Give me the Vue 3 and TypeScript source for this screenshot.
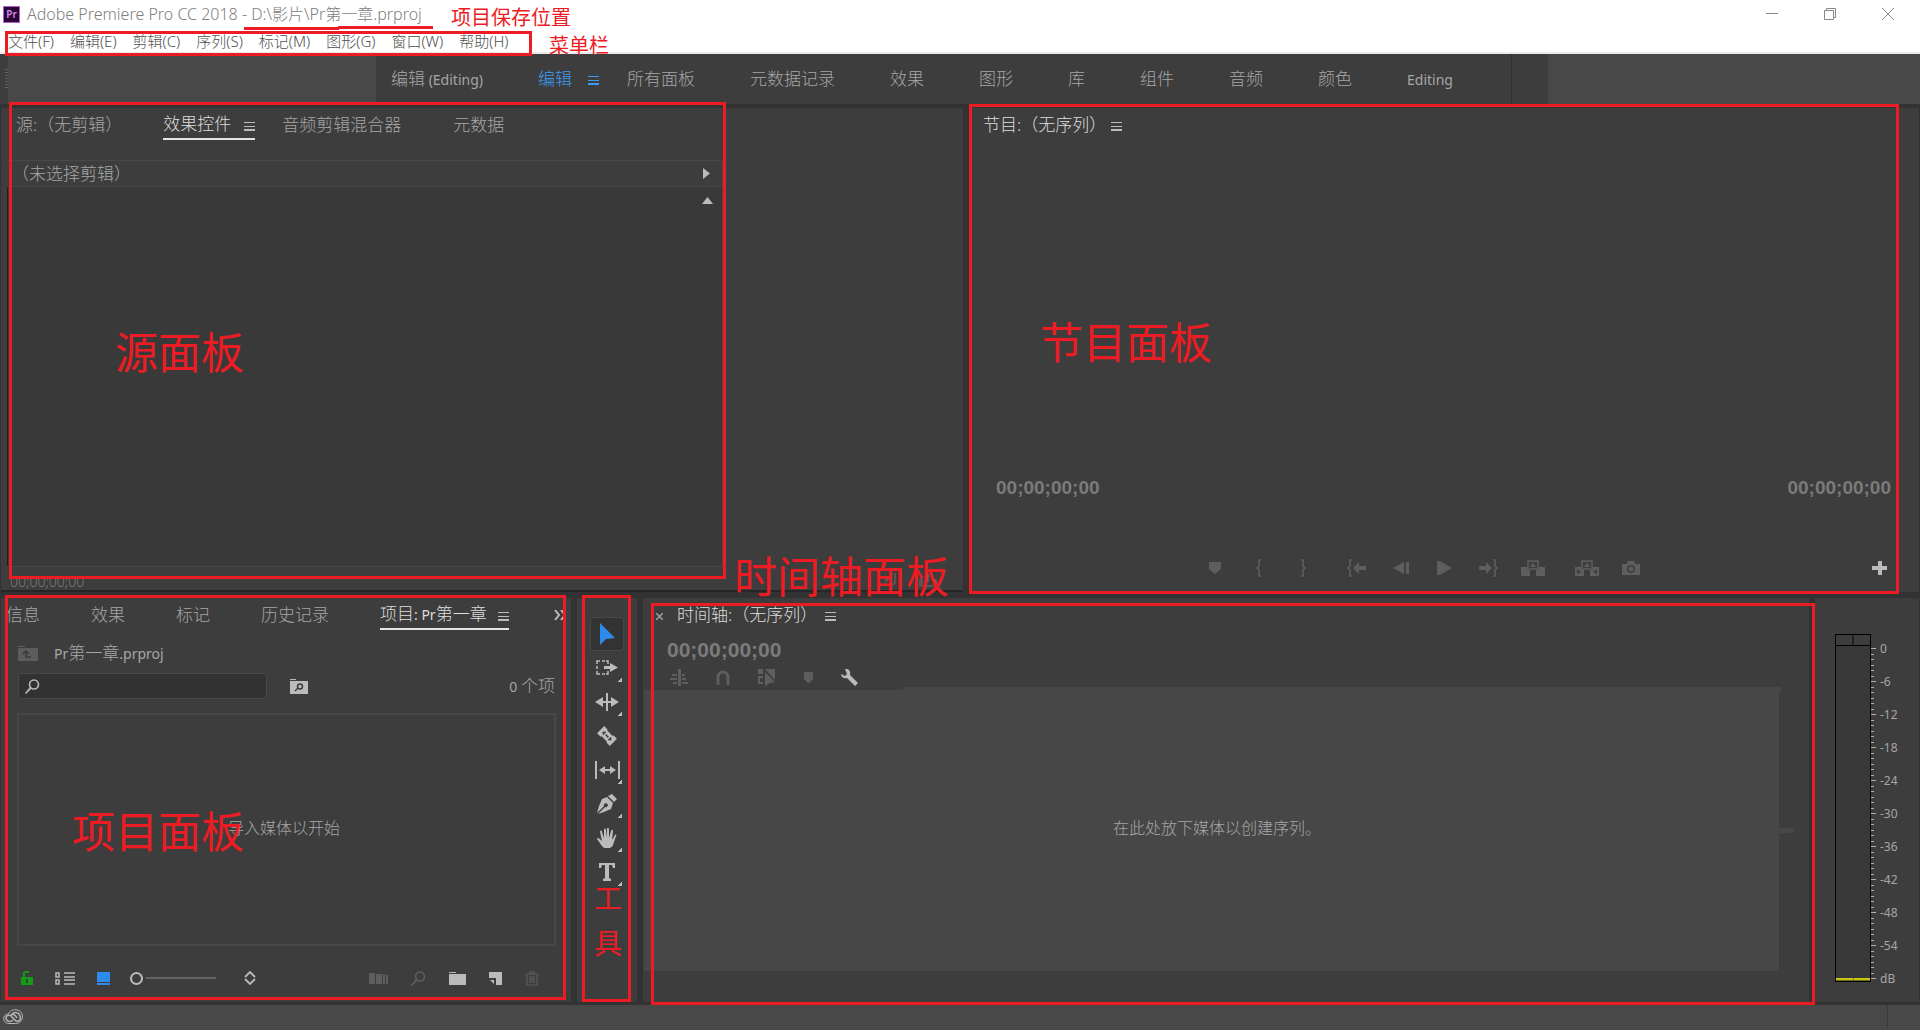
<script setup lang="ts">
import { ref } from 'vue'

interface Tab {
  label: string
  active?: boolean
}

const menus: string[] = ['文件(F)', '编辑(E)', '剪辑(C)', '序列(S)', '标记(M)', '图形(G)', '窗口(W)', '帮助(H)']

const workspaces: Tab[] = [
  { label: '编辑 (Editing)' },
  { label: '编辑', active: true },
  { label: '所有面板' },
  { label: '元数据记录' },
  { label: '效果' },
  { label: '图形' },
  { label: '库' },
  { label: '组件' },
  { label: '音频' },
  { label: '颜色' },
  { label: 'Editing' },
]

const projectTabs: Tab[] = [
  { label: '信息' },
  { label: '效果' },
  { label: '标记' },
  { label: '历史记录' },
  { label: '项目: Pr第一章', active: true },
]

// Latin runs are set smaller than the Chinese text beside them.
const runs = (text: string): { text: string; latin: boolean }[] =>
  (text.match(/[\x20-\x7e]+|[^\x20-\x7e]+/g) ?? []).map((t) => ({ text: t, latin: /^[\x20-\x7e]/.test(t) }))

const search = ref('')
const zoom = ref(0)
const levels: string[] = ['0', '-6', '-12', '-18', '-24', '-30', '-36', '-42', '-48', '-54', 'dB']

interface Icon {
  name: string
  w: number
  h: number
  body: string
}

const tools: (Icon & { more: boolean })[] = [
  { name: '选择工具', w: 16, h: 22, more: false, body: '<path d="M1 0v22l6-6 9-1z" fill="#2d8ceb"/>' },
  {
    name: '向前选择轨道工具', w: 22, h: 16, more: true,
    body: '<path d="M1 4V1h3M6 1h3M10 1h2v3M1 6v3M1 11v3h3M6 14h3M10 14h2v-3" fill="none" stroke="currentColor" stroke-width="1.5"/><path d="M8 6h6V3l8 4.500-8 4.500V9H8z"/>',
  },
  {
    name: '波纹编辑工具', w: 24, h: 18, more: true,
    body: '<path d="M11 0h2v18h-2z"/><path d="M0 9l8-5v4h8V4l8 5-8 5v-4H8v4z"/>',
  },
  {
    name: '剃刀工具', w: 20, h: 20, more: false,
    body: '<g transform="rotate(45 10 10)"><path d="M1 5h5v1h8V5h5v10h-5v-1H6v1H1z"/><path d="M4 10h2M8 10h4M14 10h2M6 8v4M14 8v4" stroke="#3d3d3d" stroke-width="1.500" fill="none"/></g>',
  },
  {
    name: '外滑工具', w: 25, h: 18, more: true,
    body: '<path d="M0 0h2v18H0zM23 0h2v18h-2zM4 9l6-4v3h5V5l6 4-6 4v-3h-5v3z"/>',
  },
  {
    name: '钢笔工具', w: 20, h: 20, more: true,
    body: '<path d="M13 1l2-1 5 5-2 2-1 1-6-6zM10 3l6 6-2 6-7 3-6 2 7-7a2 2 0 1 0-1-1l-7 7 2-7 3-7z"/>',
  },
  {
    name: '手形工具', w: 20, h: 20, more: true,
    body: '<path d="M7 20C4 18 2 13 0 11c0-2 2-1 5 2L3 4c0-2 2-2 2 0l2 6L7 2c0-2 2-2 2 0l1 8V1c0-2 2-1 2 0v9l2-7c1-2 2-1 2 0l-1 9 3-5c1-1 2 0 1 1l-2 6c-1 4-2 5-4 6z"/>',
  },
  {
    name: '文字工具', w: 18, h: 18, more: true,
    body: '<path d="M1 0h16v5h-2l-1-3h-3v13l2 1v2H5v-2l2-1V2H4L3 5H1z"/>',
  },
]

const transport: Icon[][] = [
  [
    { name: '添加标记', w: 12, h: 12, body: '<path d="M0 0h12v7l-6 5-6-5z"/>' },
    { name: '标记入点', w: 6, h: 18, body: '<path d="M5 1H3v6L1 9l2 2v6h2" fill="none" stroke="currentColor" stroke-width="1.600"/>' },
    { name: '标记出点', w: 6, h: 18, body: '<path d="M1 1h2v6l2 2-2 2v6H1" fill="none" stroke="currentColor" stroke-width="1.600"/>' },
  ],
  [
    {
      name: '转到入点', w: 19, h: 18,
      body: '<path d="M5 1H3v6L1 9l2 2v6h2" fill="none" stroke="currentColor" stroke-width="1.600"/><path d="M6 9l6-6v4h7v4h-7v4z"/>',
    },
    { name: '后退一帧', w: 16, h: 12, body: '<path d="M0 6l11-6v12zM13 0h3v12h-3z"/>' },
    { name: '播放', w: 15, h: 14, body: '<path d="M0 0h3l12 7-12 7H0z"/>' },
    {
      name: '转到出点', w: 19, h: 18,
      body: '<path d="M14 1h2v6l2 2-2 2v6h-2" fill="none" stroke="currentColor" stroke-width="1.600"/><path d="M13 9L7 3v4H0v4h7v4z"/>',
    },
    {
      name: '提升', w: 24, h: 16,
      body: '<path d="M0 7h6v3h3v6H0zM15 10h3V7h6v9h-9z"/><path d="M7 9V1h10v8z" fill="none" stroke="currentColor" stroke-width="1.500"/><path d="M12 3l3 4H9z"/>',
    },
  ],
  [
    {
      name: '提取', w: 24, h: 16,
      body: '<path fill-rule="evenodd" d="M0 7h6v3h3v6H0zM2 9v5l4-2zM15 10h3V7h6v9h-9zM22 9v5l-4-2z"/><path d="M7 9V1h10v8z" fill="none" stroke="currentColor" stroke-width="1.500"/><path d="M12 3l3 4H9z"/>',
    },
    {
      name: '导出帧', w: 18, h: 14,
      body: '<path fill-rule="evenodd" d="M0 3h5l1-3h6l1 3h5v11H0zM9 4a4 4 0 1 0 0 8 4 4 0 0 0 0-8z"/><circle cx="9" cy="8" r="2.500"/>',
    },
  ],
]

const timelineTools: (Icon & { lit?: boolean })[] = [
  {
    name: '将序列作为嵌套插入', w: 18, h: 17,
    body: '<path d="M8 0h3v17H8zM2 5h5v2H2zM0 9h7v2H0zM3 13h4v2H3zM12 5h3v2h-3zM12 9h4v2h-4zM12 13h6v2h-6z"/>',
  },
  {
    name: '对齐', w: 14, h: 15,
    body: '<path d="M2 15V7a5 5 0 0 1 10 0v8" fill="none" stroke="currentColor" stroke-width="3"/>',
  },
  {
    name: '链接选择项', w: 18, h: 17,
    body: '<path d="M0 0h5v5H0zM7 0h10v11zM7 3l10 10-5 1-5 3z"/><path d="M5 8H1v6h4" fill="none" stroke="currentColor" stroke-width="2"/>',
  },
  { name: '添加标记', w: 9, h: 11, body: '<path d="M0 0h9v7l-4 4h-1L0 7z"/>' },
  {
    name: '时间轴显示设置', w: 17, h: 17, lit: true,
    body: '<path d="M4 0c3-1 6 2 5 6l8 8-3 3-8-8C3 10 0 8 0 5l4 2 2-2z"/>',
  },
]

const footerRight: (Icon & { lit?: boolean })[] = [
  { name: '自动匹配序列', w: 19, h: 11, body: '<path d="M0 0h6v11H0zM7 1h6v10H7zM14 1h2v10h-2zM17 2h2v9h-2z"/>' },
  {
    name: '查找', w: 15, h: 15,
    body: '<circle cx="9" cy="5.500" r="4.500" fill="none" stroke="currentColor" stroke-width="1.600"/><path d="M5 8l1 2-5 5-1-1z"/>',
  },
  { name: '新建素材箱', w: 17, h: 13, lit: true, body: '<path d="M0 0h7v1H0zM0 2h17v11H0z"/>' },
  { name: '新建项', w: 13, h: 13, lit: true, body: '<path d="M0 0h13v13H7V6H0zM1 8h4v4z"/>' },
  {
    name: '清除', w: 14, h: 15,
    body: '<path d="M0 3h14M5 3V1h4v2M2 4v10h10V4M5 5v7M7 5v7M9 5v7" fill="none" stroke="currentColor" stroke-width="1.200"/>',
  },
]
</script>

<template>
  <div class="app">
    <header class="title-area">
      <div class="title-bar">
        <span class="logo">Pr</span>
        <h1>Adobe Premiere Pro CC 2018 - D:\影片\Pr第一章.prproj</h1>
        <div class="window-buttons">
          <button aria-label="最小化">
            <svg width="12" height="12" viewBox="0 0 12 12"><path d="M0 5.500h12" /></svg>
          </button>
          <button aria-label="向下还原">
            <svg width="12" height="12" viewBox="0 0 12 12"><path d="M.5 2.500h9v9h-9zM2.500 2.500v-2h9v9h-2" /></svg>
          </button>
          <button aria-label="关闭">
            <svg width="12" height="12" viewBox="0 0 12 12"><path d="M0 0l12 12M12 0L0 12" /></svg>
          </button>
        </div>
      </div>
      <nav class="menu">
        <button v-for="m in menus" :key="m">{{ m }}</button>
      </nav>
      <i class="stroke first"></i>
      <i class="stroke second"></i>
      <span class="note small path-note">项目保存位置</span>
      <div class="frame menu-frame"></div>
      <span class="note small menu-note">菜单栏</span>
    </header>

    <nav class="workspaces">
      <i class="grip"></i>
      <div class="blank left"></div>
      <div class="workspace-list">
        <button v-for="w in workspaces" :key="w.label" :class="{ active: w.active }">
          <span v-for="r in runs(w.label)" :key="r.text" :class="{ latin: r.latin }">{{ r.text }}</span>
          <i v-if="w.active" class="burger"></i>
        </button>
      </div>
      <div class="blank right"></div>
    </nav>

    <main class="stage">
      <div class="row top">
        <section class="panel source">
          <div class="tabs source-tabs">
            <button class="tight">源:（无剪辑）</button>
            <button class="active">效果控件<i class="burger"></i></button>
            <button>音频剪辑混合器</button>
            <button>元数据</button>
          </div>
          <div class="effects">
            <div class="clip-row">
              <span>（未选择剪辑）</span>
              <svg width="7" height="11" viewBox="0 0 7 11"><path d="M0 0l7 5.500L0 11z" /></svg>
            </div>
            <div class="clip-body">
              <svg width="11" height="7" viewBox="0 0 11 7"><path d="M0 7l5.500-7L11 7z" /></svg>
            </div>
          </div>
          <div class="source-foot">
            <span>00;00;00;00</span>
            <svg width="52" height="14" viewBox="0 0 52 14"><path d="M0 2l6 4-6 4zM9 0h2v10c-1 3-4 3-4 1l2-1zM34 6h4v6h10V6h4v8H34zM42 9V4h-3l4-4 4 4h-3v5z" /></svg>
          </div>
          <div class="frame source-frame"></div>
          <span class="note source-note">源面板</span>
        </section>

        <section class="panel program">
          <div class="tabs program-tabs">
            <button class="lit">节目:（无序列）</button>
            <i class="burger"></i>
          </div>
          <div class="viewer"></div>
          <div class="timecodes">
            <span>00;00;00;00</span>
            <span>00;00;00;00</span>
          </div>
          <div class="transport">
            <div class="transport-list">
              <div v-for="(group, g) in transport" :key="g" class="transport-group">
                <button v-for="b in group" :key="b.name" :aria-label="b.name">
                  <svg :width="b.w" :height="b.h" :viewBox="`0 0 ${b.w} ${b.h}`" v-html="b.body"></svg>
                </button>
              </div>
            </div>
            <button class="plus" aria-label="按钮编辑器">
              <svg width="15" height="14" viewBox="0 0 15 14"><path d="M6 0h4v5h5v4h-5v5H6V9H0V5h6z" /></svg>
            </button>
          </div>
          <div class="frame program-frame"></div>
          <span class="note program-note">节目面板</span>
        </section>
      </div>

      <div class="row bottom">
        <section class="panel project">
          <div class="tabs project-tabs">
            <button v-for="t in projectTabs" :key="t.label" :class="{ active: t.active }">
              <span v-for="r in runs(t.label)" :key="r.text" :class="{ latin: r.latin }">{{ r.text }}</span>
              <i v-if="t.active" class="burger"></i>
            </button>
            <svg class="overflow" width="12" height="10" viewBox="0 0 12 10"><path d="M1 0l4 5-4 5M7 0l4 5-4 5" /></svg>
          </div>
          <div class="project-name">
            <svg width="20" height="15" viewBox="0 0 20 15">
              <path d="M0 0h7v1H0zM0 2h20v13H0z" fill="#5c5c5c" />
              <path d="M8 6v5h5M5 8l3-3 3 3" fill="none" stroke="#3a3a3a" stroke-width="1.500" />
            </svg>
            <div>
              <span v-for="r in runs('Pr第一章.prproj')" :key="r.text" :class="{ latin: r.latin }">{{ r.text }}</span>
            </div>
          </div>
          <div class="search-row">
            <label class="search">
              <svg width="15" height="15" viewBox="0 0 15 15">
                <circle cx="9" cy="5.500" r="4.500" fill="none" stroke="#bbb" stroke-width="1.600" />
                <path d="M5 8l1 2-5 5-1-1z" fill="#bbb" />
              </svg>
              <input v-model="search" type="text" aria-label="搜索" />
            </label>
            <button aria-label="从查询创建新的搜索素材箱">
              <svg width="18" height="15" viewBox="0 0 18 15">
                <path d="M0 0h6v1H0zM0 2h18v13H0z" fill="#bbb" />
                <circle cx="10" cy="7.500" r="2.500" fill="none" stroke="#3d3d3d" stroke-width="1.500" />
                <path d="M8 9l-3 3" stroke="#3d3d3d" stroke-width="1.500" />
              </svg>
            </button>
            <div class="count"><span class="latin">0 </span>个项</div>
          </div>
          <div class="bin">导入媒体以开始</div>
          <div class="project-foot">
            <button aria-label="项目可写">
              <svg width="12" height="14" viewBox="0 0 12 14">
                <path d="M3 6V4a2 2 0 0 1 2-3h3" fill="none" stroke="#149a14" stroke-width="2" />
                <path fill-rule="evenodd" d="M0 6h12v8H0zM5 8v4h2V8z" fill="#149a14" />
              </svg>
            </button>
            <button aria-label="列表视图">
              <svg width="20" height="13" viewBox="0 0 20 13">
                <path d="M1 1h3v4H1zM1 8h3v4H1zM9 1h11M9 5h11M9 8h11M9 12h11" fill="none" stroke="#bbb" stroke-width="1.500" />
              </svg>
            </button>
            <button aria-label="图标视图">
              <svg width="13" height="13" viewBox="0 0 13 13"><path d="M0 0h13v10H0zM0 11h13v2H0z" fill="#2d8ceb" /></svg>
            </button>
            <input v-model="zoom" class="zoom" type="range" min="0" max="100" aria-label="缩放" />
            <button class="sort" aria-label="排序图标">
              <svg width="12" height="14" viewBox="0 0 12 14"><path d="M1 6l5-5 5 5M1 8l5 5 5-5" fill="none" stroke="#bbb" stroke-width="1.800" /></svg>
            </button>
            <div class="foot-right">
              <button v-for="b in footerRight" :key="b.name" :class="{ lit: b.lit }" :aria-label="b.name">
                <svg :width="b.w" :height="b.h" :viewBox="`0 0 ${b.w} ${b.h}`" v-html="b.body"></svg>
              </button>
            </div>
          </div>
          <div class="frame project-frame"></div>
          <span class="note project-note">项目面板</span>
        </section>

        <section class="panel tools">
          <button v-for="(t, i) in tools" :key="t.name" :class="{ selected: i === 0 }" :aria-label="t.name">
            <svg :width="t.w" :height="t.h" :viewBox="`0 0 ${t.w} ${t.h}`" v-html="t.body"></svg>
            <i v-if="t.more" class="corner"></i>
          </button>
          <div class="frame tools-frame"></div>
          <span class="note tools-note">工具</span>
        </section>

        <section class="panel timeline">
          <div class="tabs timeline-tabs">
            <svg width="7" height="7" viewBox="0 0 7 7"><path d="M0 0l7 7M7 0L0 7" stroke="#a0a0a0" stroke-width="1.500" /></svg>
            <button class="lit">时间轴:（无序列）</button>
            <i class="burger"></i>
          </div>
          <div class="timeline-time">00;00;00;00</div>
          <div class="timeline-tools">
            <button v-for="b in timelineTools" :key="b.name" :class="{ lit: b.lit }" :aria-label="b.name">
              <svg :width="b.w" :height="b.h" :viewBox="`0 0 ${b.w} ${b.h}`" v-html="b.body"></svg>
            </button>
          </div>
          <div class="drop">在此处放下媒体以创建序列。</div>
          <div class="frame timeline-frame"></div>
          <span class="note timeline-note">时间轴面板</span>
        </section>

        <section class="panel meter">
          <div class="bar">
            <div class="peak"></div>
            <div class="level"></div>
          </div>
          <div class="ticks">
            <i v-for="n in 61" :key="n" :class="{ major: (n - 1) % 6 === 0 }"></i>
          </div>
          <div class="levels">
            <span v-for="l in levels" :key="l">{{ l }}</span>
          </div>
        </section>
      </div>
    </main>

    <footer class="status">
      <svg width="20" height="15" viewBox="0 0 20 15">
        <g fill="none" stroke="#b4b4b4">
          <path d="M6 14.500C-1 14.500-1 5 5.500 5 7-1 19-1 19.500 7c0 5-3 7.500-7 7.500z" />
          <path d="M10 11c-3 3-7 1-7-2s4-4 6-1l4 4c4 1 5-2 4-5-1-4-7-5-9 0M8 6c2-2 4 0 6 3" stroke-width="1.500" />
        </g>
      </svg>
      <i></i>
    </footer>
  </div>
</template>

<style>
body {
  background: #323232;
}
</style>

<style scoped>
.app {
  display: flex;
  flex-direction: column;
  min-height: 100vh;
  overflow: hidden;
  background: #323232;
  color: #a6a6a6;
  font-family: 'Noto Sans', 'Noto Sans CJK SC', sans-serif;
  font-size: 17px;
  font-weight: 300;
  line-height: 20px;
}
.app * {
  box-sizing: border-box;
}
button {
  margin: 0;
  padding: 0;
  border: 0;
  background: none;
  color: inherit;
  font: inherit;
  white-space: nowrap;
}
svg {
  display: block;
  fill: currentColor;
  flex: none;
}
.latin {
  font-size: 14px;
  font-weight: 400;
  white-space: pre;
}
.frame {
  position: absolute;
  z-index: 2;
  border: 3px solid #ed1c24;
  pointer-events: none;
}
.note {
  position: absolute;
  z-index: 3;
  color: #ed1c24;
  font-size: 43px;
  font-weight: 400;
  line-height: 50px;
  white-space: nowrap;
  pointer-events: none;
}
.note.small {
  font-size: 20px;
  line-height: 24px;
}
.burger {
  display: block;
  width: 11px;
  height: 9px;
  border-top: 1px solid currentColor;
  border-bottom: 2px solid currentColor;
  background: linear-gradient(currentColor, currentColor) 0 3px / 100% 1px no-repeat;
}

/* title and menu */
.title-area {
  position: relative;
  height: 54px;
  background: #fff;
  border-bottom: 2px solid #ececee;
}
.title-bar {
  display: flex;
  align-items: center;
  height: 28px;
  padding: 0 26px 0 3px;
}
.logo {
  width: 17px;
  height: 17px;
  border: 1px solid #b55fd0;
  background: #2a0634;
  color: #d98cf0;
  font-size: 10px;
  font-weight: 600;
  line-height: 14px;
  text-align: center;
}
h1 {
  margin: 0 0 0 7px;
  color: #808080;
  font-size: 16px;
  font-weight: 300;
}
.window-buttons {
  display: flex;
  gap: 46px;
  margin-left: auto;
}
.window-buttons svg {
  fill: none;
  stroke: #888;
}
.menu {
  display: flex;
  gap: 16px;
  padding-left: 8px;
  color: #505050;
  font-size: 15px;
  line-height: 27px;
}
.stroke {
  position: absolute;
  width: 95px;
  height: 3px;
  background: #ed1c24;
}
.stroke.first {
  left: 244px;
  top: 27px;
}
.stroke.second {
  left: 338px;
  top: 26px;
}
.path-note {
  left: 451px;
  top: 6px;
}
.menu-note {
  left: 549px;
  top: 34px;
}
.menu-frame {
  left: 5px;
  top: 31px;
  width: 527px;
  height: 25px;
}

/* workspaces */
.workspaces {
  display: flex;
  height: 50px;
  background: #3d3d3d;
}
.grip {
  width: 3px;
  height: 20px;
  margin: 15px 0 0 5px;
  background: repeating-linear-gradient(#606060 0 1px, #3d3d3d 1px 3px);
}
.blank {
  background: #484848;
}
.blank.left {
  width: 368px;
}
.blank.right {
  flex: 1;
  margin-left: 36px;
}
.workspace-list {
  display: flex;
  flex: none;
  gap: 55px;
  width: 1136px;
  padding-left: 15px;
  border-right: 1px solid #303030;
}
.workspace-list button {
  position: relative;
}
.workspace-list .active {
  color: #3b9bf0;
}
.workspace-list .burger {
  position: absolute;
  left: 50px;
  top: 22px;
}

/* panels */
.stage {
  display: flex;
  flex: 1;
  flex-direction: column;
  gap: 6px;
  padding: 4px 1px 3px;
}
.row {
  display: grid;
  gap: 6px;
}
.top {
  flex: 484 0 0;
  grid-template-columns: 962fr 950fr;
}
.bottom {
  flex: 404 0 0;
  grid-template-columns: 570fr 60px 1166fr 104px;
}
.panel {
  position: relative;
  display: flex;
  flex-direction: column;
  min-width: 0;
  background: #3d3d3d;
}
.tabs {
  display: flex;
  flex: none;
  height: 34px;
}
.tabs button {
  position: relative;
  height: 32px;
  padding-top: 2px;
}
.tabs .active,
.tabs .lit {
  color: #dedede;
}
.tabs .burger {
  color: #bcbcbc;
}
.tabs .active {
  border-bottom: 2px solid #e4e4e4;
}
.tabs .active .burger {
  position: absolute;
  right: 0;
  top: 14px;
}
.source-tabs {
  gap: 27px;
  height: 52px;
  padding-left: 15px;
}
.source-tabs .tight {
  margin-right: 14px;
}
.source-tabs .active {
  padding-right: 24px;
}
.source-tabs button:last-child {
  margin-left: 25px;
}
.effects {
  display: flex;
  flex: 1;
  flex-direction: column;
  width: 75%;
  padding-left: 6px;
}
.clip-row {
  display: flex;
  align-items: center;
  justify-content: space-between;
  height: 27px;
  padding: 0 12px 0 5px;
  border: solid #484848;
  border-width: 1px 1px 1px 0;
}
.clip-row svg,
.clip-body svg {
  fill: #bbb;
}
.clip-body {
  display: flex;
  flex: 1;
  justify-content: flex-end;
  padding: 10px 9px 0 0;
  border: solid #484848;
  border-width: 0 1px 1px 0;
  box-shadow: inset 1px 0 #1e1e1e;
  background: #393939;
}
.source-foot {
  display: flex;
  justify-content: space-between;
  height: 25px;
  padding: 6px 26px 0 9px;
  border-bottom: 2px solid #262626;
  color: #7c7c7c;
  font-size: 14px;
  line-height: 18px;
}
.source-foot svg {
  color: #575757;
}
.source-frame {
  inset: -6px 237px 13px 8px;
}
.source-note {
  left: 114px;
  top: 220px;
}
.program-tabs {
  gap: 5px;
  padding-left: 14px;
}
.program-tabs .burger,
.timeline-tabs .burger {
  margin-top: 14px;
}
.viewer {
  flex: 1;
}
.timecodes {
  display: flex;
  justify-content: space-between;
  padding: 0 28px 44px 27px;
  color: #7b7b7b;
  font: 700 19px/24px 'Liberation Sans', sans-serif;
}
.transport {
  display: flex;
  align-items: center;
  height: 48px;
  padding: 0 32px 0 4px;
  color: #5e5e5e;
}
.transport-list {
  display: flex;
  flex: 1;
  justify-content: center;
  gap: 10px;
}
.transport-group {
  display: flex;
}
.transport-group button {
  display: grid;
  place-items: center;
  width: 44px;
  height: 24px;
}
.plus {
  color: #bbb;
}
.program-frame {
  inset: -4px 20px -2px 0;
}
.program-note {
  left: 71px;
  top: 210px;
}

/* project */
.project-tabs {
  gap: 51px;
  padding-left: 5px;
}
.project-tabs .active {
  padding-right: 22px;
}
.overflow {
  margin: 12px 5px 0 auto;
  fill: none;
  stroke: #bbb;
  stroke-width: 2;
}
.project-tabs button:nth-last-child(2) {
  margin-right: -20px;
}
.project-name {
  display: flex;
  align-items: center;
  gap: 16px;
  height: 41px;
  padding: 2px 0 0 17px;
}
.search-row {
  display: flex;
  align-items: center;
  padding: 0 16px 0 17px;
}
.search {
  display: flex;
  align-items: center;
  width: 249px;
  height: 26px;
  padding-left: 6px;
  border: 1px solid #484848;
  border-radius: 3px;
  background: #323232;
}
.search input {
  flex: 1;
  min-width: 0;
  margin-left: 6px;
  border: 0;
  outline: 0;
  background: none;
  color: #ccc;
  font: inherit;
}
.search-row button {
  margin-left: 23px;
}
.count {
  margin-left: auto;
}
.bin {
  display: flex;
  flex: 1;
  align-items: center;
  justify-content: center;
  margin: 14px 15px 0 16px;
  padding: 0 5px 3px 0;
  border: 2px solid #484848;
  font-size: 16px;
}
.project-foot {
  display: flex;
  align-items: center;
  gap: 22px;
  height: 56px;
  padding: 8px 32px 0 20px;
}
.zoom {
  width: 87px;
  height: 14px;
  margin: 0 0 0 -2px;
  appearance: none;
  background: linear-gradient(#646464, #646464) 16px 6px / 70px 2px no-repeat;
}
.zoom::-webkit-slider-thumb {
  appearance: none;
  width: 13px;
  height: 13px;
  border: 2px solid #bbb;
  border-radius: 50%;
  background: #3d3d3d;
}
.sort {
  margin-left: 5px;
}
.foot-right {
  display: flex;
  align-items: center;
  gap: 23px;
  margin-left: auto;
  color: #5e5e5e;
}
.foot-right .lit,
.timeline-tools .lit {
  color: #bbb;
}
.project-frame {
  inset: -3px 5px 2px 4px;
}
.project-note {
  left: 71px;
  top: 209px;
}

/* tools */
.tools {
  align-items: center;
  padding-top: 19px;
  color: #bbb;
}
.tools button {
  position: relative;
  display: grid;
  place-items: center;
  width: 34px;
  height: 34px;
}
.tools .selected {
  border: 1px solid #484848;
  border-radius: 3px;
  background: #333;
}
.corner {
  position: absolute;
  right: 2px;
  bottom: 3px;
  width: 4px;
  height: 4px;
  background: linear-gradient(135deg, transparent 50%, #bbb 50%);
}
.tools-frame {
  inset: -3px 6px 0 5px;
}
.tools-note {
  left: 17px;
  top: 278px;
  width: 28px;
  font-size: 28px;
  line-height: 45px;
  white-space: normal;
}

/* timeline */
.timeline-tabs {
  padding-left: 13px;
}
.timeline-tabs svg {
  margin: 15px 14px 0 0;
}
.timeline-tabs .burger {
  margin-left: 8px;
}
.timeline-time {
  padding-left: 24px;
  color: #7b7b7b;
  font: 700 21px/36px 'Liberation Sans', sans-serif;
}
.timeline-tools {
  display: flex;
  align-items: center;
  gap: 28px;
  height: 22px;
  padding: 0 0 4px 27px;
  color: #5e5e5e;
}
.drop {
  position: relative;
  display: flex;
  flex: 1;
  align-items: center;
  justify-content: center;
  margin: 0 30px 31px 1px;
  padding: 0 0 5px 11px;
  background: #474747;
  font-size: 16px;
}
.drop::before {
  content: '';
  position: absolute;
  left: 259px;
  right: -2px;
  top: -3px;
  height: 6px;
  background: #474747;
}
.drop::after {
  content: '';
  position: absolute;
  right: -15px;
  bottom: 49%;
  width: 15px;
  height: 5px;
  background: #474747;
}
.timeline-frame {
  inset: 5px -6px -3px 8px;
}
.timeline-note {
  left: 91px;
  top: -46px;
}

/* audio meter */
.meter {
  flex-direction: row;
  padding: 36px 0 20px 20px;
}
.bar {
  display: flex;
  flex-direction: column;
  justify-content: space-between;
  width: 36px;
  border: 1px solid #000;
  background: #393939;
}
.peak {
  height: 11px;
  border-bottom: 1px solid #000;
  background: linear-gradient(#222, #222) 50% 0 / 2px 100% no-repeat #3d3d3d;
}
.level {
  height: 3px;
  border-bottom: 1px solid #6b6a14;
  background: linear-gradient(#777733, #777733) 50% 0 / 1px 100% no-repeat #c8c814;
}
.ticks {
  display: flex;
  flex-direction: column;
  justify-content: space-between;
  padding: 14px 0 3px;
}
.ticks i {
  width: 3px;
  height: 1px;
  background: #b0b0b0;
}
.ticks .major {
  width: 5px;
}
.levels {
  display: flex;
  flex-direction: column;
  justify-content: space-between;
  margin: 8px 0 -4px 4px;
  font-size: 12px;
  font-weight: 400;
  line-height: 14px;
}
.status {
  display: flex;
  align-items: center;
  justify-content: space-between;
  height: 25px;
  padding: 0 32px 2px 3px;
  background: #484848;
}
.status i {
  width: 1px;
  height: 25px;
  background: #3a3a3a;
}
</style>
